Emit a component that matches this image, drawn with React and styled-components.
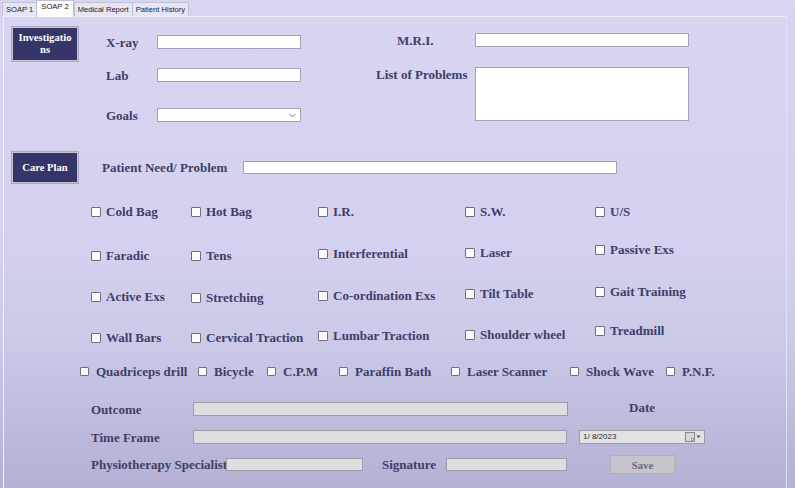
import React from "react";
import styled, { createGlobalStyle } from "styled-components";

const GlobalStyle = createGlobalStyle`
  html, body {
    margin: 0;
    padding: 0;
    overflow: hidden;
  }
`;

const treatments = [
  [
    { name: "Cold Bag", dy: 0 },
    { name: "Hot Bag", dy: 0 },
    { name: "I.R.", dy: 0 },
    { name: "S.W.", dy: 0 },
    { name: "U/S", dy: 0 },
  ],
  [
    { name: "Faradic", dy: 3 },
    { name: "Tens", dy: 3 },
    { name: "Interferential", dy: 1 },
    { name: "Laser", dy: 0 },
    { name: "Passive Exs", dy: -3 },
  ],
  [
    { name: "Active Exs", dy: 3 },
    { name: "Stretching", dy: 4 },
    { name: "Co-ordination Exs", dy: 2 },
    { name: "Tilt Table", dy: 0 },
    { name: "Gait Training", dy: -2 },
  ],
  [
    { name: "Wall Bars", dy: 3 },
    { name: "Cervical Traction", dy: 3 },
    { name: "Lumbar Traction", dy: 1 },
    { name: "Shoulder wheel", dy: 0 },
    { name: "Treadmill", dy: -4 },
  ],
];

const extras = [
  "Quadriceps drill",
  "Bicycle",
  "C.P.M",
  "Paraffin Bath",
  "Laser Scanner",
  "Shock Wave",
  "P.N.F.",
];

const tabs = ["SOAP 1", "SOAP 2", "Medical Report", "Patient History"];

function App() {
  return (
    <>
      <GlobalStyle />
      <Window>
        <TabStrip>
          {tabs.map((t) => (
            <Tab key={t} $active={t === "SOAP 2"}>
              {t}
            </Tab>
          ))}
        </TabStrip>
        <TabPage>
          <TopSection>
            <NavButton $h={34}>
              Investigatio
              <br />
              ns
            </NavButton>
            <LeftFields>
              <FieldRow $mt={0}>
                <Label $w={51}>X-ray</Label>
                <TextBox $w={144} />
              </FieldRow>
              <FieldRow $mt={19}>
                <Label $w={51}>Lab</Label>
                <TextBox $w={144} />
              </FieldRow>
              <FieldRow $mt={26}>
                <Label $w={51}>Goals</Label>
                <SelectBox>
                  <svg width="7" height="5" viewBox="0 0 7 5">
                    <path d="M0.5 1 L3.5 4 L6.5 1" fill="none" stroke="#7a7a86" strokeWidth="1" />
                  </svg>
                </SelectBox>
              </FieldRow>
            </LeftFields>
            <RightFields>
              <FieldRow $mt={0}>
                <Label $w={99} $pl={21}>M.R.I.</Label>
                <TextBox $w={214} />
              </FieldRow>
              <AreaRow>
                <Label $w={99}>List of Problems</Label>
                <TextArea />
              </AreaRow>
            </RightFields>
          </TopSection>

          <CareRow>
            <NavButton $h={31}>Care Plan</NavButton>
            <Label $w={141} $ml={24}>Patient Need/ Problem</Label>
            <TextBox $w={374} $h={13} />
          </CareRow>

          <CheckGrid>
            {treatments.flat().map((item) => (
              <CheckItem key={item.name} $dy={item.dy}>
                <Box />
                <Label>{item.name}</Label>
              </CheckItem>
            ))}
          </CheckGrid>

          <ExtraRow>
            {extras.map((name) => (
              <CheckItem key={name} $gap={7}>
                <Box $size={9} />
                <Label>{name}</Label>
              </CheckItem>
            ))}
          </ExtraRow>

          <BottomBlock>
            <FieldRow $mt={0}>
              <Label $w={102}>Outcome</Label>
              <GrayBox $w={375} />
              <DateLabel>Date</DateLabel>
            </FieldRow>
            <FieldRow $mt={14}>
              <Label $w={102}>Time Frame</Label>
              <GrayBox $w={374} />
              <DatePicker>
                <span>1/ 8/2023</span>
                <PickerIcons>
                  <svg width="17" height="10" viewBox="0 0 17 10">
                    <rect x="0.5" y="0.5" width="9" height="9" fill="#d6d6d6" stroke="#8a8a8a" />
                    <path d="M6.5 9.5 L9.5 6.5 L6.5 6.5 Z" fill="#ffffff" stroke="#8a8a8a" strokeWidth="0.8" />
                    <path d="M11.5 3.5 L15.5 3.5 L13.5 6 Z" fill="#444" />
                  </svg>
                </PickerIcons>
              </DatePicker>
            </FieldRow>
            <SignRow>
              <Label $w={135}>Physiotherapy Specialist</Label>
              <GrayBox $w={137} $h={13} />
              <Label $w={64} $ml={19}>Signature</Label>
              <GrayBox $w={121} $h={13} />
              <SaveButton>Save</SaveButton>
            </SignRow>
          </BottomBlock>
        </TabPage>
      </Window>
    </>
  );
}

export default App;

const Window = styled.div`
  width: 795px;
  height: 488px;
  box-sizing: border-box;
  padding-left: 3px;
  padding-right: 8px;
  display: flex;
  flex-direction: column;
  background: linear-gradient(
    180deg,
    #d7d5f1 0%,
    #d3d1ef 50%,
    #cbc9e8 70%,
    #b3b1d4 100%
  );
  font-family: "Liberation Serif", "Times New Roman", serif;
  overflow: hidden;
`;

const TabStrip = styled.div`
  height: 16px;
  display: flex;
  align-items: flex-end;
  margin-left: -1px;
`;

const Tab = styled.div`
  box-sizing: border-box;
  height: ${(p) => (p.$active ? "17px" : "14px")};
  margin-bottom: ${(p) => (p.$active ? "-1px" : "0")};
  padding: ${(p) => (p.$active ? "1px 4px 0" : "2px 3px 0")};
  font-family: "Liberation Sans", Arial, sans-serif;
  font-size: 7.6px;
  color: #1c1c1c;
  background: ${(p) => (p.$active ? "#fbfbfd" : "#e6e5f3")};
  border: 1px solid #c2c1d4;
  border-bottom: none;
  margin-right: ${(p) => (p.$active ? "0" : "-1px")};
  position: relative;
  z-index: ${(p) => (p.$active ? 2 : 1)};
  white-space: nowrap;
`;

const TabPage = styled.div`
  flex: 1;
  display: flex;
  flex-direction: column;
  border-left: 1px solid #f1f0fa;
  border-top: 1px solid #ecebf8;
  border-right: 1px solid #e2e1f3;
`;

const Label = styled.span`
  display: inline-block;
  box-sizing: border-box;
  width: ${(p) => (p.$w ? `${p.$w}px` : "auto")};
  flex-shrink: 0;
  margin-left: ${(p) => (p.$ml ? `${p.$ml}px` : "0")};
  padding-left: ${(p) => (p.$pl ? `${p.$pl}px` : "0")};
  font-family: "Liberation Serif", "Times New Roman", serif;
  font-weight: bold;
  font-size: 13px;
  line-height: 15px;
  color: #3e3e68;
  white-space: nowrap;
`;

const NavButton = styled.div`
  box-sizing: border-box;
  width: 66px;
  height: ${(p) => p.$h}px;
  flex-shrink: 0;
  display: flex;
  align-items: center;
  justify-content: center;
  text-align: center;
  background: #35356a;
  border: 1px solid #c4c3d4;
  box-shadow: 0 0 0 1px #a9a8bf;
  color: #ffffff;
  font-weight: bold;
  font-size: 10.6px;
  line-height: 12px;
`;

const TopSection = styled.div`
  display: flex;
  align-items: flex-start;
  padding: 10px 0 0 8px;
`;

const LeftFields = styled.div`
  display: flex;
  flex-direction: column;
  margin-left: 28px;
  padding-top: 8px;
`;

const RightFields = styled.div`
  display: flex;
  flex-direction: column;
  margin-left: 75px;
  padding-top: 6px;
`;

const FieldRow = styled.div`
  display: flex;
  align-items: center;
  height: 14px;
  margin-top: ${(p) => p.$mt}px;
`;

const AreaRow = styled.div`
  display: flex;
  align-items: flex-start;
  margin-top: 20px;
`;

const TextBox = styled.div`
  box-sizing: border-box;
  width: ${(p) => p.$w}px;
  height: ${(p) => p.$h || 14}px;
  flex-shrink: 0;
  background: #ffffff;
  border: 1px solid #a3a2b2;
`;

const TextArea = styled.div`
  box-sizing: border-box;
  width: 214px;
  height: 54px;
  background: #ffffff;
  border: 1px solid #a3a2b2;
`;

const SelectBox = styled.div`
  box-sizing: border-box;
  width: 144px;
  height: 14px;
  display: flex;
  align-items: center;
  justify-content: flex-end;
  padding-right: 4px;
  background: #ffffff;
  border: 1px solid #a3a2b2;
`;

const CareRow = styled.div`
  display: flex;
  align-items: center;
  margin-top: 30px;
  padding-left: 8px;
`;

const CheckGrid = styled.div`
  display: grid;
  grid-template-columns: 100px 127px 147px 130px auto;
  grid-template-rows: repeat(4, 15px);
  row-gap: 26px;
  align-items: start;
  margin-top: 21px;
  padding-left: 87px;
`;

const CheckItem = styled.label`
  display: flex;
  align-items: center;
  gap: ${(p) => p.$gap || 5}px;
  height: 15px;
  margin-top: ${(p) => p.$dy || 0}px;
`;

const Box = styled.span`
  box-sizing: border-box;
  width: ${(p) => p.$size || 10}px;
  height: ${(p) => p.$size || 10}px;
  flex-shrink: 0;
  background: #fbfbfd;
  border: 1px solid #6e6e78;
  border-radius: 1px;
`;

const ExtraRow = styled.div`
  display: grid;
  grid-template-columns: 118px 69px 72px 112px 119px 96px auto;
  height: 15px;
  margin-top: 22px;
  padding-left: 76px;
`;

const BottomBlock = styled.div`
  display: flex;
  flex-direction: column;
  margin-top: 23px;
  padding-left: 87px;
`;

const GrayBox = styled.div`
  box-sizing: border-box;
  width: ${(p) => p.$w}px;
  height: ${(p) => p.$h || 14}px;
  flex-shrink: 0;
  background: #dedee0;
  border: 1px solid #9c9ba6;
`;

const DateLabel = styled(Label)`
  width: 126px;
  margin-left: 11px;
  text-align: center;
  margin-top: -4px;
`;

const DatePicker = styled.div`
  box-sizing: border-box;
  width: 126px;
  height: 14px;
  margin-left: 12px;
  margin-top: -1px;
  display: flex;
  align-items: center;
  justify-content: space-between;
  padding: 0 2px 0 3px;
  background: #e3e3e5;
  border: 1px solid #9c9ba6;
  font-family: "Liberation Sans", Arial, sans-serif;
  font-size: 8px;
  color: #2a2a2a;
`;

const PickerIcons = styled.span`
  display: flex;
  align-items: center;
`;

const SignRow = styled.div`
  display: flex;
  align-items: center;
  height: 19px;
  margin-top: 11px;
`;

const SaveButton = styled.div`
  box-sizing: border-box;
  width: 65px;
  height: 19px;
  margin-left: 43px;
  display: flex;
  align-items: center;
  justify-content: center;
  background: #c6c5cc;
  border: 1px solid #aeadb8;
  color: #6c6b80;
  font-weight: bold;
  font-size: 11px;
`;
